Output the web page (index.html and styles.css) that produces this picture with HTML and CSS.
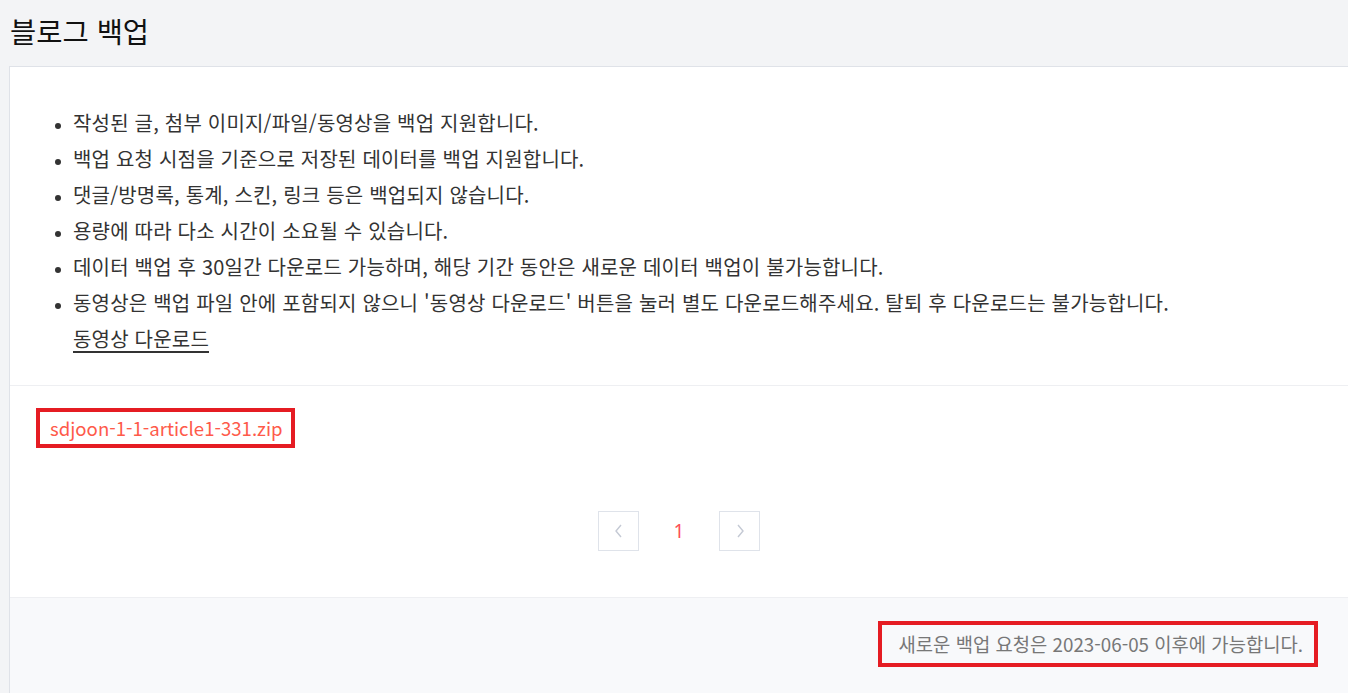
FILE: index.html
```html
<!DOCTYPE html>
<html lang="ko">
<head>
<meta charset="utf-8">
<title>블로그 백업</title>
<link rel="stylesheet" href="styles.css">
</head>
<body>
<div class="page">
  <h1 class="title">블로그 백업</h1>
  <div class="card">
    <section class="notice">
      <ul class="notice-list">
        <li>작성된 글, 첨부 이미지/파일/동영상을 백업 지원합니다.</li>
        <li>백업 요청 시점을 기준으로 저장된 데이터를 백업 지원합니다.</li>
        <li>댓글/방명록, 통계, 스킨, 링크 등은 백업되지 않습니다.</li>
        <li>용량에 따라 다소 시간이 소요될 수 있습니다.</li>
        <li>데이터 백업 후 30일간 다운로드 가능하며, 해당 기간 동안은 새로운 데이터 백업이 불가능합니다.</li>
        <li>동영상은 백업 파일 안에 포함되지 않으니 '동영상 다운로드' 버튼을 눌러 별도 다운로드해주세요. 탈퇴 후 다운로드는 불가능합니다.<br><a class="video-link" href="#">동영상 다운로드</a></li>
      </ul>
    </section>
    <section class="files">
      <div class="file-row"><span class="mark mark-file"><a class="file-link" href="#">sdjoon-1-1-article1-331.zip</a></span></div>
      <nav class="pager">
        <button class="pager-btn" aria-label="이전"><svg width="12" height="16" viewBox="0 0 12 16"><path d="M8 2 L3 8 L8 14" fill="none" stroke="#c4c9d4" stroke-width="1.4"/></svg></button>
        <span class="pager-num">1</span>
        <button class="pager-btn" aria-label="다음"><svg width="12" height="16" viewBox="0 0 12 16"><path d="M4 2 L9 8 L4 14" fill="none" stroke="#c4c9d4" stroke-width="1.4"/></svg></button>
      </nav>
    </section>
    <footer class="card-foot">
      <span class="mark mark-foot">새로운 백업 요청은 2023-06-05 이후에 가능합니다.</span>
    </footer>
  </div>
</div>
</body>
</html>
```

FILE: styles.css
```css
html, body {
  margin: 0;
  padding: 0;
  background: #f3f4f6;
  overflow: hidden;
}
body {
  font-family: "Noto Sans CJK KR", "Noto Sans", sans-serif;
  color: #333;
}
.page {
  padding-left: 9px;
}
.title {
  margin: 0;
  height: 66px;
  padding-left: 1px;
  font-size: 28.5px;
  font-weight: 400;
  line-height: 62px;
  color: #111;
}
.card {
  background: #fff;
  border-top: 1px solid #dfe2e8;
  border-left: 1px solid #dfe2e8;
}
.notice {
  padding: 38px 0 28px;
  border-bottom: 1px solid #eeeff2;
}
.notice-list {
  margin: 0;
  padding-left: 63px;
  font-size: 20px;
  line-height: 36px;
  letter-spacing: 0.2px;
}
.notice-list li::marker {
  font-size: 15px;
}
.video-link {
  color: #333;
  text-decoration: underline;
  text-underline-offset: 4px;
  line-height: 33px;
}
.files {
  padding: 22px 0 46px;
}
.file-row {
  padding-left: 26px;
  height: 40px;
}
.mark {
  display: inline-block;
  border: 4px solid #e51c23;
  box-sizing: border-box;
}
.mark-file {
  height: 40px;
  padding: 0 8px 0 10px;
  line-height: 32px;
}
.file-link {
  color: #fe5a4a;
  font-size: 18.6px;
  text-decoration: none;
}
.pager {
  margin-top: 63px;
  display: flex;
  justify-content: center;
  align-items: center;
}
.pager-btn {
  width: 41px;
  height: 40px;
  background: #fff;
  border: 1px solid #dfe3ea;
  display: flex;
  align-items: center;
  justify-content: center;
  padding: 0;
}
.pager-num {
  width: 80px;
  text-align: center;
  color: #fd4f55;
  font-size: 19px;
  font-family: "Noto Sans", sans-serif;
}
.card-foot {
  background: #f8f9fb;
  border-top: 1px solid #eeeff2;
  padding: 23px 30px 40px 0;
  text-align: right;
}
.mark-foot {
  height: 46px;
  line-height: 38px;
  padding: 0 11px 0 17px;
  color: #777;
  font-size: 18.8px;
}
```
